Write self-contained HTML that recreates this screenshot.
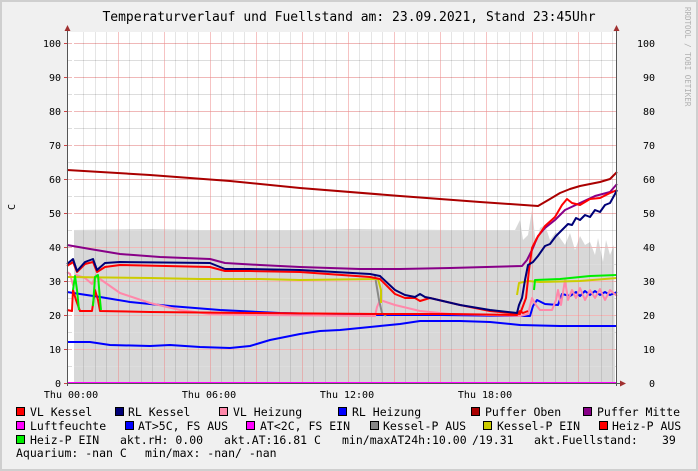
<!DOCTYPE html>
<html><head><meta charset="utf-8"><style>
html,body{margin:0;padding:0;background:#f0f0f0}
svg{display:block}
text{font-family:"DejaVu Sans Mono","Liberation Mono",monospace;fill:#000}
</style></head><body>
<svg width="698" height="471" viewBox="0 0 698 471" xmlns="http://www.w3.org/2000/svg">
<rect x="0" y="0" width="698" height="471" fill="#f0f0f0"/>
<rect x="1" y="1" width="696" height="469" fill="none" stroke="#cfcfcf" stroke-width="2"/>
<rect x="67" y="32" width="550" height="351" fill="#fff"/>
<path d="M72,383 L72,230 L150,229 L250,231 L350,229 L450,230 L515,230 L520,220 L523,240 L528,235 L532,210 L536,245 L540,228 L545,225 L550,240 L556,232 L560,238 L565,245 L570,233 L575,250 L580,236 L585,245 L590,242 L595,255 L598,238 L603,262 L606,240 L610,255 L614,245 L615,383 Z" fill="#d8d8d8"/>
<g stroke="#ddd" stroke-width="1">
<path d="M67,366.5H617M67,332.5H617M67,298.5H617M67,264.5H617M67,230.5H617M67,196.5H617M67,162.5H617M67,128.5H617M67,94.5H617M67,60.5H617"/>
</g>
<g stroke="#f0b8b8" stroke-width="1">
<path d="M67,349.5H617M67,315.5H617M67,281.5H617M67,247.5H617M67,213.5H617M67,179.5H617M67,145.5H617M67,111.5H617M67,77.5H617M67,43.5H617"/>
</g>
<path d="M83.5,32V383M95.5,32V383M106.5,32V383M129.5,32V383M141.5,32V383M152.5,32V383M175.5,32V383M187.5,32V383M198.5,32V383M221.5,32V383M233.5,32V383M244.5,32V383M267.5,32V383M279.5,32V383M290.5,32V383M313.5,32V383M325.5,32V383M336.5,32V383M359.5,32V383M371.5,32V383M382.5,32V383M405.5,32V383M417.5,32V383M428.5,32V383M451.5,32V383M463.5,32V383M474.5,32V383M497.5,32V383M509.5,32V383M520.5,32V383M543.5,32V383M555.5,32V383M566.5,32V383M589.5,32V383M601.5,32V383M612.5,32V383" stroke="#000" stroke-opacity="0.1"/>
<path d="M72.5,32V383M118.5,32V383M164.5,32V383M210.5,32V383M256.5,32V383M302.5,32V383M348.5,32V383M394.5,32V383M440.5,32V383M486.5,32V383M532.5,32V383M578.5,32V383" stroke="#e88" stroke-opacity="0.5"/>
<rect x="72" y="32" width="2" height="351" fill="#fff"/>
<g fill="none" stroke-width="2" stroke-linejoin="round">
<polyline stroke="#0000ff" points="67,342 90,342 110,345 150,346 170,345 200,347 230,348 250,346 270,340 300,334 320,331 340,330 360,328 380,326 400,324 420,321 440,321 460,321 490,322 520,325 560,326 617,326"/>
<polyline stroke="#aa0000" points="67,170 150,175 230,181 300,188 400,196 480,202 538,206 550,199 560,193 570,189 580,186 590,184 600,182 610,179 617,172"/>
<polyline stroke="#880088" points="67,245 90,249 120,254 160,257 210,259 225,263 260,265 300,267 360,269 400,269 450,268 522,266 527,260 532,250 538,236 545,228 555,220 565,210 580,203 595,196 610,192 617,184"/>
<polyline stroke="#0000ff" points="67,292 80,294 100,297 130,302 170,306 220,310 280,313 360,315 440,315 520,316 530,316 533,306 537,300 545,304 558,305 562,294 570,296 576,292 580,296 585,291 590,295 595,291 600,295 605,292 610,295 617,292"/>
<polyline stroke="#ff88aa" points="67,272 70,274 73,285 76,275 85,278 92,284 96,275 100,279 120,293 150,303 180,310 210,314 260,315 375,316 377,307 380,300 395,305 420,311 450,314 490,315 520,316 528,314 532,298 536,305 540,310 552,310 556,300 558,290 561,305 565,280 568,300 572,290 576,298 580,288 585,300 590,290 595,298 600,289 605,300 610,290 617,296"/>
<polyline stroke="#888" points="375,276 379,300 382,313 386,316"/>
<polyline stroke="#cccc00" points="67,277 150,278 200,279 260,279 300,280 378,279 381,290 381,303"/>
<polyline stroke="#cccc00" points="517,295 519,283 528,281 540,282 580,281 617,278"/>
<polyline stroke="#ff0000" points="67,310 72,311 73,290 76,300 80,311 92,311 95,290 98,300 100,311 150,312 250,313 380,314 430,314 450,314 517,315 520,311 523,313 528,311"/>
<polyline stroke="#00ee00" points="73,290 75,276 77,290 79,310"/>
<polyline stroke="#00ee00" points="93,306 95,277 98,275 100,300 101,310"/>
<polyline stroke="#00ee00" points="534,290 535,280 560,279 590,276 617,275"/>
<polyline stroke="#ff0000" points="67,266 73,262 77,272 85,264 93,262 97,272 105,267 120,265 210,267 225,271 250,271 300,272 370,277 380,279 395,294 405,298 415,298 420,301 430,298 460,305 490,311 520,314 526,298 529,270 532,248 537,238 545,226 555,217 562,205 567,199 572,203 580,205 590,199 600,198 610,193 617,190"/>
<polyline stroke="#000077" points="67,264 73,259 77,271 85,262 93,259 97,270 105,263 120,262 210,263 225,269 250,269 300,270 370,274 380,276 395,290 405,295 415,297 420,294 425,297 430,298 460,305 490,310 517,313 519,305 522,298 525,280 528,265 533,262 538,256 545,246 550,244 556,236 562,230 568,224 572,225 576,218 580,220 585,215 590,217 595,210 600,212 605,205 610,203 615,194 617,190"/>
<line x1="67" y1="383" x2="617" y2="383" stroke="#ff00ff" stroke-width="2"/>
</g>
<line x1="67.5" y1="30" x2="67.5" y2="386" stroke="#555"/>
<line x1="616.5" y1="30" x2="616.5" y2="386" stroke="#555"/>
<line x1="64" y1="383.5" x2="622" y2="383.5" stroke="#555"/>
<path d="M64.5,31 L67.5,25 L70.5,31Z M613.5,31 L616.5,25 L619.5,31Z M620,380.5 L626,383.5 L620,386.5Z" fill="#a03030"/>
<path d="M64,383.5H67M64,349.5H67M64,315.5H67M64,281.5H67M64,247.5H67M64,213.5H67M64,179.5H67M64,145.5H67M64,111.5H67M64,77.5H67M64,43.5H67" stroke="#c44"/>
<g font-size="10" text-anchor="end">
<text x="61" y="47">100</text><text x="61" y="81">90</text><text x="61" y="115">80</text><text x="61" y="149">70</text><text x="61" y="183">60</text><text x="61" y="217">50</text><text x="61" y="251">40</text><text x="61" y="285">30</text><text x="61" y="319">20</text><text x="61" y="353">10</text><text x="61" y="387">0</text>
<text x="655" y="47">100</text><text x="655" y="81">90</text><text x="655" y="115">80</text><text x="655" y="149">70</text><text x="655" y="183">60</text><text x="655" y="217">50</text><text x="655" y="251">40</text><text x="655" y="285">30</text><text x="655" y="319">20</text><text x="655" y="353">10</text><text x="655" y="387">0</text>
</g>
<g font-size="10" text-anchor="middle">
<text x="71" y="398">Thu 00:00</text><text x="209" y="398">Thu 06:00</text><text x="347" y="398">Thu 12:00</text><text x="485" y="398">Thu 18:00</text>
</g>
<text x="15" y="207" font-size="10" transform="rotate(-90 15 207)" text-anchor="middle">C</text>
<text x="349" y="21" font-size="13" text-anchor="middle">Temperaturverlauf und Fuellstand am: 23.09.2021, Stand 23:45Uhr</text>
<text x="685" y="7" font-size="7.5" style="fill:#b0b0b0" transform="rotate(90 685 7)">RRDTOOL / TOBI OETIKER</text>
<g stroke="#000" stroke-width="1">
<rect x="16.5" y="407.5" width="8" height="8" fill="#ff0000"/>
<rect x="115.5" y="407.5" width="8" height="8" fill="#000077"/>
<rect x="219.5" y="407.5" width="8" height="8" fill="#ff88aa"/>
<rect x="338.5" y="407.5" width="8" height="8" fill="#0000ff"/>
<rect x="471.5" y="407.5" width="8" height="8" fill="#aa0000"/>
<rect x="583.5" y="407.5" width="8" height="8" fill="#880088"/>
<rect x="16.5" y="421.5" width="8" height="8" fill="#ff00ff"/>
<rect x="125.5" y="421.5" width="8" height="8" fill="#0000ff"/>
<rect x="246.5" y="421.5" width="8" height="8" fill="#ff00ff"/>
<rect x="370.5" y="421.5" width="8" height="8" fill="#888888"/>
<rect x="483.5" y="421.5" width="8" height="8" fill="#cccc00"/>
<rect x="599.5" y="421.5" width="8" height="8" fill="#ff0000"/>
<rect x="16.5" y="435.5" width="8" height="8" fill="#00ee00"/>
</g>
<g font-size="11.5">
<text x="30" y="416">VL Kessel</text><text x="128" y="416">RL Kessel</text><text x="233" y="416">VL Heizung</text><text x="352" y="416">RL Heizung</text><text x="485" y="416">Puffer Oben</text><text x="597" y="416">Puffer Mitte</text>
<text x="30" y="430">Luftfeuchte</text><text x="138" y="430">AT&gt;5C, FS AUS</text><text x="260" y="430">AT&lt;2C, FS EIN</text><text x="383" y="430">Kessel-P AUS</text><text x="497" y="430">Kessel-P EIN</text><text x="612" y="430">Heiz-P AUS</text>
<text x="30" y="444">Heiz-P EIN</text><text x="120" y="444">akt.rH: 0.00</text><text x="224" y="444">akt.AT:16.81 C</text><text x="342" y="444">min/maxAT24h:10.00</text><text x="472" y="444">/19.31</text><text x="534" y="444">akt.Fuellstand:</text><text x="662" y="444">39</text>
<text x="16" y="457">Aquarium: -nan C</text><text x="145" y="457">min/max: -nan/ -nan</text>
</g>
</svg>
</body></html>
